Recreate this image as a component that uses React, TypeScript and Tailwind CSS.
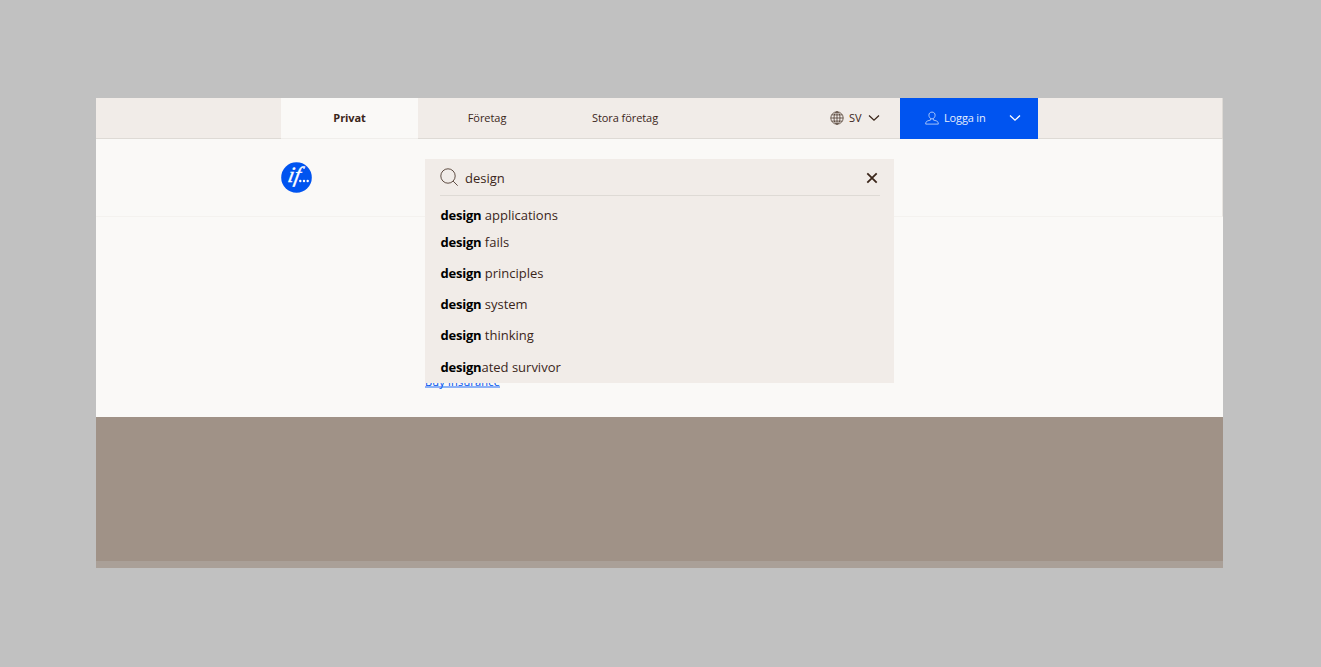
import React from "react";

const suggestions = [
  { match: "design", rest: " applications", height: "h-[27px]" },
  { match: "design", rest: " fails", height: "h-[27px]" },
  { match: "design", rest: " principles", height: "h-[35px]" },
  { match: "design", rest: " system", height: "h-[27px]" },
  { match: "design", rest: " thinking", height: "h-[35px]" },
  { match: "design", rest: "ated survivor", height: "h-[29px]" },
];

function Chevron({ className }: { className: string }) {
  return (
    <svg viewBox="0 0 12 8" className={className} fill="none" stroke="currentColor" strokeWidth="1.3">
      <path d="M1 1.5 6 6.2 11 1.5" />
    </svg>
  );
}

function Globe() {
  return (
    <svg viewBox="0 0 14 14" className="h-[14px] w-[14px]" fill="none" stroke="currentColor" strokeWidth="0.7">
      <circle cx="7" cy="7" r="6.2" />
      <ellipse cx="7" cy="7" rx="3" ry="6.2" />
      <path d="M7 .8v12.400M.8 7h12.400M1.700 3.900h10.600M1.700 10.100h10.600" />
    </svg>
  );
}

function Person() {
  return (
    <svg viewBox="0 0 14 14" className="h-[14px] w-[14px]" fill="none" stroke="currentColor" strokeWidth="0.8">
      <path d="M7 1.100c2 0 3.100 1.300 3.100 3.100S8.800 7.900 7 7.900 3.900 6 3.900 4.200 5 1.100 7 1.100Z" />
      <path d="M5.700 7.700v1.300L2.600 9.900C1.300 10.300.7 11.300.7 13.100h12.600c0-1.800-.6-2.800-1.900-3.200L8.300 9V7.700" />
    </svg>
  );
}

function Logo() {
  return (
    <svg viewBox="0 0 31 31" className="h-[31px] w-[31px]">
      <circle cx="15.500" cy="15.500" r="15.300" fill="#0054f0" />
      <text
        x="6"
        y="20.300"
        fill="#fff"
        stroke="#fff"
        strokeWidth="0.4"
        transform="translate(4 0) skewX(-11)"
        className="font-['Liberation_Serif',serif] text-[22px] italic"
      >
        if
      </text>
      <g fill="#fff">
        <circle cx="19.300" cy="19" r="1.200" />
        <circle cx="23" cy="19" r="1.200" />
        <circle cx="26.700" cy="19" r="1.200" />
      </g>
    </svg>
  );
}

function TopBar() {
  return (
    <nav className="flex h-[41px] border-r border-b border-[#dedad5] bg-[#f1ece8] pl-[185px] text-[11px] leading-[40px] whitespace-nowrap">
      <div className="h-[41px] w-[137px] border-b border-[#f0eeeb] bg-[#faf9f7] text-center font-bold tracking-[-0.1px]">Privat</div>
      <div className="w-[138px] text-center tracking-[-0.05px]">Företag</div>
      <div className="w-[138px] text-center tracking-[-0.07px]">Stora företag</div>
      <div className="ml-[136px] flex w-[70.500px] items-center">
        <Globe />
        <span className="ml-[5px] w-[15px]">SV</span>
        <Chevron className="ml-[4px] h-[8px] w-[12px]" />
      </div>
      <div className="-ml-[0.500px] flex h-[41px] w-[138px] shrink-0 items-center bg-[#0054f0] pb-px pl-[25px] text-white">
        <span className="opacity-80"><Person /></span>
        <span className="ml-[5px] w-[42px] tracking-[-0.15px] opacity-90">Logga in</span>
        <Chevron className="ml-[23px] h-[8px] w-[12px]" />
      </div>
    </nav>
  );
}

function SearchPanel() {
  return (
    <section className="absolute top-[61px] left-[329px] h-[224px] w-[469px] overflow-hidden bg-[#f1ece8] px-[15.500px] text-[13px]">
      <div className="-mx-px flex h-[37px] items-center border-b border-[#dedad5]">
        <svg viewBox="0 0 18 18" className="h-[18px] w-[18px]" fill="none" stroke="currentColor" strokeWidth="0.8">
          <circle cx="8" cy="8" r="7.200" />
          <path d="m13.100 13.100 4.600 4.600" />
        </svg>
        <span className="ml-[7.500px] grow pt-[3px]">design</span>
        <svg viewBox="0 0 12 12" className="mt-[2px] mr-[2px] h-[12px] w-[12px]" fill="none" stroke="currentColor" strokeWidth="1.800">
          <path d="m1.300 1.300 9.400 9.400M10.700 1.300l-9.400 9.400" />
        </svg>
      </div>
      <ul className="pt-[6px]">
        {suggestions.map((item) => (
          <li key={item.rest} className={`flex items-center whitespace-pre ${item.height}`}>
            <b className="font-bold tracking-[-0.22px] text-black">{item.match}</b>
            <span>{item.rest}</span>
          </li>
        ))}
      </ul>
    </section>
  );
}

export default function App() {
  return (
    <div className="h-[667px] w-[1321px] bg-[#c1c1c1] pt-[98px] pl-[96px] font-['Open_Sans',sans-serif] text-[#3b261a]">
      <main className="relative flex h-[470px] w-[1127px] flex-col bg-[#faf9f7]">
        <TopBar />
        <header className="h-[78px] border-r border-b border-r-[#e8e5e1] border-b-[#f4f2ef] pt-[23px] pl-[185px]">
          <Logo />
        </header>
        <div className="flex h-[200px] items-end pb-[29px] pl-[329px]">
          <a className="h-[14px] border-b-2 border-[#8db2f6] text-[11px] leading-[15px] tracking-[0.2px] text-[#0054f0]">Buy insurance</a>
        </div>
        <div className="grow bg-[#a09287]" />
        <div className="h-[7px] bg-[#aaa098]" />
        <SearchPanel />
      </main>
    </div>
  );
}
